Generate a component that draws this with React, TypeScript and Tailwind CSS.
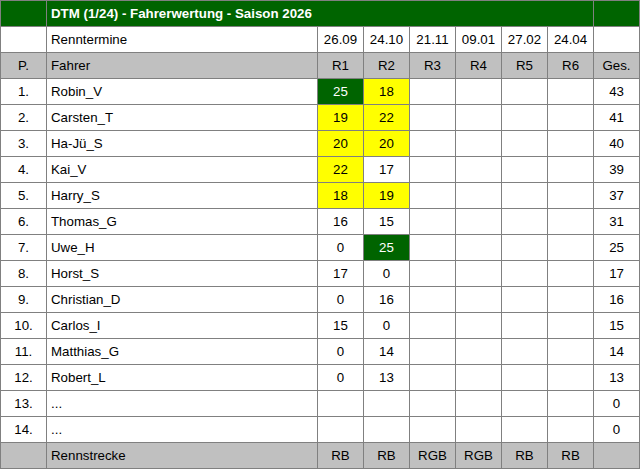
const races = ["26.09", "24.10", "21.11", "09.01", "27.02", "24.04"];

type Pts = { v: string; c?: "g" | "y" };

const rows: { name: string; pts: Pts[]; total: number }[] = [
  { name: "Robin_V", pts: [{ v: "25", c: "g" }, { v: "18", c: "y" }], total: 43 },
  { name: "Carsten_T", pts: [{ v: "19", c: "y" }, { v: "22", c: "y" }], total: 41 },
  { name: "Ha-Jü_S", pts: [{ v: "20", c: "y" }, { v: "20", c: "y" }], total: 40 },
  { name: "Kai_V", pts: [{ v: "22", c: "y" }, { v: "17" }], total: 39 },
  { name: "Harry_S", pts: [{ v: "18", c: "y" }, { v: "19", c: "y" }], total: 37 },
  { name: "Thomas_G", pts: [{ v: "16" }, { v: "15" }], total: 31 },
  { name: "Uwe_H", pts: [{ v: "0" }, { v: "25", c: "g" }], total: 25 },
  { name: "Horst_S", pts: [{ v: "17" }, { v: "0" }], total: 17 },
  { name: "Christian_D", pts: [{ v: "0" }, { v: "16" }], total: 16 },
  { name: "Carlos_I", pts: [{ v: "15" }, { v: "0" }], total: 15 },
  { name: "Matthias_G", pts: [{ v: "0" }, { v: "14" }], total: 14 },
  { name: "Robert_L", pts: [{ v: "0" }, { v: "13" }], total: 13 },
  { name: "...", pts: [], total: 0 },
  { name: "...", pts: [], total: 0 },
];

const tracks = ["RB", "RB", "RGB", "RGB", "RB", "RB"];

const td = "border border-[#808080] p-0 text-center";
const tdName = "border border-[#808080] p-0 pl-[4px] text-left";

function cellBg(c?: "g" | "y") {
  if (c === "g") return "bg-[#006400] text-white";
  if (c === "y") return "bg-[#ffff00]";
  return "";
}

export default function App() {
  return (
    <div className="w-[640px] h-[469px] bg-white overflow-hidden">
      <table
        className="table-fixed border-collapse w-[640px] text-[13.3px] text-black"
        style={{ fontFamily: '"Liberation Sans", Arial, sans-serif' }}
      >
        <colgroup>
          <col className="w-[46px]" />
          <col className="w-[271px]" />
          {races.map((r) => (
            <col key={r} className="w-[46px]" />
          ))}
          <col />
        </colgroup>
        <tbody>
          <tr className="h-[26px] bg-[#006400]">
            <td className={td}></td>
            <td className={`${tdName} text-white font-bold`} colSpan={7}>
              DTM (1/24) - Fahrerwertung - Saison 2026
            </td>
            <td className={td}></td>
          </tr>
          <tr className="h-[26px]">
            <td className={td}></td>
            <td className={tdName}>Renntermine</td>
            {races.map((r) => (
              <td key={r} className={td}>
                {r}
              </td>
            ))}
            <td className={td}></td>
          </tr>
          <tr className="h-[26px] bg-[#c0c0c0]">
            <td className={td}>P.</td>
            <td className={tdName}>Fahrer</td>
            {races.map((_, i) => (
              <td key={i} className={td}>
                R{i + 1}
              </td>
            ))}
            <td className={td}>Ges.</td>
          </tr>
          {rows.map((row, i) => (
            <tr key={i} className="h-[26px]">
              <td className={td}>{i + 1}.</td>
              <td className={tdName}>{row.name}</td>
              {races.map((_, j) => (
                <td key={j} className={`${td} ${cellBg(row.pts[j]?.c)}`}>
                  {row.pts[j]?.v}
                </td>
              ))}
              <td className={td}>{row.total}</td>
            </tr>
          ))}
          <tr className="h-[26px] bg-[#c0c0c0]">
            <td className={td}></td>
            <td className={tdName}>Rennstrecke</td>
            {tracks.map((t, i) => (
              <td key={i} className={td}>
                {t}
              </td>
            ))}
            <td className={td}></td>
          </tr>
        </tbody>
      </table>
    </div>
  );
}
